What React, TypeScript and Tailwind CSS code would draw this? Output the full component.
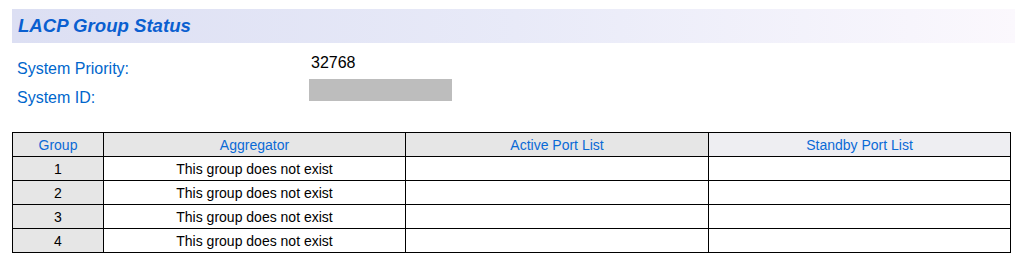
import React from 'react'

const groups = [1, 2, 3, 4]

export default function App() {
    return (
        <div className="min-h-[270px] w-[1026px] bg-white px-[12px] pt-[9px] font-['Liberation_Sans',Arial,sans-serif]">
            {/* Title bar */}
            <div className="flex h-[34px] w-[1003px] items-center bg-gradient-to-r from-[#dcdff3] via-[#e8eaf8] to-[#fbf8fd] pl-[6px]">
                <h1 className="text-[18.6px] font-bold italic leading-none text-[#0a5fd0]">LACP Group Status</h1>
            </div>

            {/* System info */}
            <div className="mt-[11px] flex h-[24px] pl-[5px]">
                <div className="w-[292px] pt-[6px] text-[16px] leading-[18px] text-[#0066cc]">System Priority:</div>
                <div className="pl-[2px] text-[16px] leading-[18px] text-black">32768</div>
            </div>
            <div className="flex h-[29px] pl-[5px]">
                <div className="w-[292px] pt-[11px] text-[16px] leading-[18px] text-[#0066cc]">System ID:</div>
                <div className="mt-[1px] h-[22px] w-[143px] bg-[#bdbdbd]" />
            </div>

            {/* Group table */}
            <table className="mt-[25px] w-[998px] table-fixed border-collapse text-[14px] leading-none">
                <colgroup>
                    <col className="w-[91px]" />
                    <col className="w-[302px]" />
                    <col className="w-[303px]" />
                    <col className="w-[302px]" />
                </colgroup>
                <thead>
                    <tr className="h-[24px] bg-[#e6e6e6] text-[#0a6ad6]">
                        <th className="border border-black font-normal">Group</th>
                        <th className="border border-black font-normal">Aggregator</th>
                        <th className="border border-black font-normal">Active Port List</th>
                        <th className="border border-black bg-[#eeeef2] font-normal">Standby Port List</th>
                    </tr>
                </thead>
                <tbody>
                    {groups.map((g) => (
                        <tr key={g} className="h-[24px] text-center text-black">
                            <td className="border border-black bg-[#e6e6e6]">{g}</td>
                            <td className="border border-black">This group does not exist</td>
                            <td className="border border-black"></td>
                            <td className="border border-black"></td>
                        </tr>
                    ))}
                </tbody>
            </table>
        </div>
    )
}
